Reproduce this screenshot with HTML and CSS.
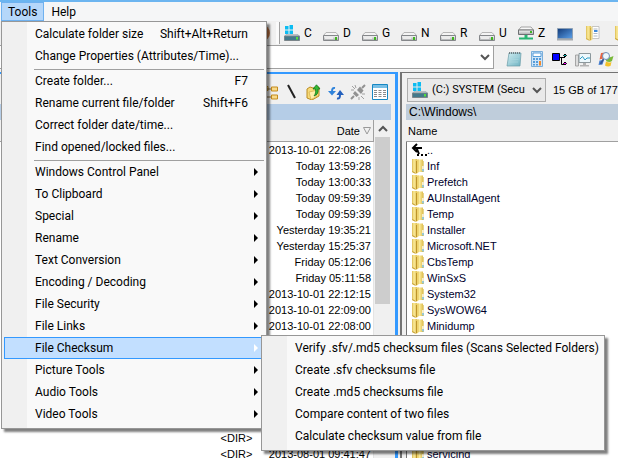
FILE: index.html
```html
<!DOCTYPE html>
<html lang="en">
<head>
<meta charset="utf-8">
<title>File Manager</title>
<link rel="stylesheet" href="styles.css">
</head>
<body>
<svg class="defs" aria-hidden="true">
  <defs>
    <linearGradient id="metal" x1="0" y1="0" x2="0" y2="1"><stop offset="0" stop-color="#fafafa"/><stop offset="1" stop-color="#a9abae"/></linearGradient>
    <linearGradient id="gold" x1="0" y1="0" x2="1" y2="0"><stop offset="0" stop-color="#dcbb50"/><stop offset=".4" stop-color="#fbeb9c"/><stop offset="1" stop-color="#dfbf52"/></linearGradient>
    <linearGradient id="screen" x1="0" y1="0" x2="1" y2="1"><stop offset="0" stop-color="#123a78"/><stop offset="1" stop-color="#5aa0ea"/></linearGradient>
    <linearGradient id="pad" x1="0" y1="0" x2="1" y2="1"><stop offset="0" stop-color="#d2eef2"/><stop offset="1" stop-color="#6db2c2"/></linearGradient>
    <symbol id="drive" viewBox="0 0 16 16">
      <path d="M3 7.500h10l2.500 3v4h-15v-4z" fill="#f4f4f4" stroke="#b5b5b5"/>
      <path d="M.5 10.500h15v5h-15z" fill="url(#metal)" stroke="#85878a"/>
      <path d="M2 12h8v2H2z" fill="#ececec"/><path d="M12 12h2v3h-2z" fill="#3fb421"/>
    </symbol>
    <symbol id="windrive" viewBox="0 0 16 16">
      <path d="M1 1h3.500v3.500H1zM5.500 0H9v4.500H5.500zM1 5.500h3.500V9H1zM5.500 5.500H9V9H5.500z" fill="#0bbcf2"/>
      <path d="M2 9.500h12l1.500 2h-15z" fill="#d6dde2" stroke="#9da5aa" stroke-width=".6"/>
      <path d="M.5 11h15v4.500h-15z" fill="#43798b" stroke="#7b858a"/><path d="M12 12h2v2.500h-2z" fill="#56dc3c"/>
    </symbol>
    <symbol id="netdrive" viewBox="0 0 16 16">
      <path d="M3 2h10l2.500 3h-15z" fill="#f8f8f8" stroke="#a3a3a3"/>
      <path d="M.5 5h15v4.500h-15z" fill="url(#metal)" stroke="#6e7073"/><path d="M12 6h2v2h-2z" fill="#3fb421"/>
      <path d="M6.500 10h3v2.500H15v2H1v-2h5.500z" fill="#27b573"/>
    </symbol>
    <symbol id="laptop" viewBox="0 0 16 16"><path d="M.5 3.500h15v10H.5z" fill="url(#screen)" stroke="#8da0b5"/><path d="M0 14h16v1.500H0z" fill="#a5a9ad"/></symbol>
    <symbol id="folderdoc" viewBox="0 0 16 16"><path d="M1 1h5v14H2l-1-1z" fill="url(#gold)"/><path d="M7 1.500h7v12H7z" fill="#fff" stroke="#b7b7b7" stroke-width=".8"/><path d="M8.500 4h4M8.500 8.500h4M8.500 11h4" stroke="#99a7b5" stroke-width=".8"/><path d="M9 5h3.500v2H9z" fill="#3d89db"/><path d="M5 3.500 7.500 1v13.500L5 16z" fill="#efd984"/><path d="M5.500 3v12M1.500 13.500l3 2" stroke="#c9a440" stroke-width=".9" fill="none"/></symbol>
    <symbol id="folder" viewBox="0 0 14 16"><path d="M1 1h5v14H2l-1-1z" fill="url(#gold)"/><path d="M6 1.500h6V14H7z" fill="url(#gold)"/><path d="M5 3.500 7.500 1v13.500L5 16z" fill="#efd36c"/><path d="M5.500 3v12M1.500 13.500l3 2" stroke="#bd942b" fill="none"/><path d="M12 3h1v11h-1z" fill="#e6d38c"/><path d="M11.300 8h1.200v5h-1.200z" fill="#fff"/><path d="M11.500 11h1v2.500h-1z" fill="#3fa5dd"/></symbol>
    <symbol id="notepad" viewBox="0 0 16 16"><path d="M3 2h12l-1 13H1z" fill="url(#pad)" stroke="#6b9ca8" stroke-width=".7"/><path d="M3.500 1v2M5.500 1v2M7.500 1v2M9.500 1v2M11.500 1v2M13.500 1v2" stroke="#636d71" stroke-width=".8"/><path d="M4 6h9M3.500 8.500h9M3 11h9" stroke="#afd9df" stroke-width=".6"/></symbol>
    <symbol id="calc" viewBox="0 0 16 16"><path d="M2.500.5h11v15h-11z" fill="#cfe5f8" stroke="#79aeda"/><path d="M4 2h8v3.500H4z" fill="#fff" stroke="#3489d0" stroke-width=".8"/><path d="M4 7h2v2H4zM7 7h2v2H7zM4 10h2v2H4zM7 10h2v2H7zM4 13h2v1.500H4zM7 13h2v1.500H7z" fill="#579dda"/><path d="M10 7h2v2h-2z" fill="#579dda"/><path d="M10 10h2v4.500h-2z" fill="#f08a2e"/></symbol>
    <symbol id="tree" viewBox="0 0 16 16"><path d="M.5 2.500h7v7h-7z" fill="#00f" stroke="#000"/><path d="M8 6.500h5M9.500 6.500v7H12" fill="none" stroke="#000"/><path d="M11.500 4.500 13 3l1.500 1.500L13 6z" fill="#0aa" stroke="#000"/><path d="M11.500 12.500 13 11l1.500 1.500L13 14z" fill="#f0f" stroke="#000"/></symbol>
    <symbol id="monitor" viewBox="0 0 16 16"><path d="M.5 4h3v11h-3z" fill="#ddd" stroke="#969696" stroke-width=".8"/><path d="M4 2.500h11.500v9H4z" fill="#edf8fc" stroke="#8c989d"/><path d="m5 8 2.500-2.500L10 9l2-2h3" fill="none" stroke="#2b9dc6"/><path d="M8 12h3v2h3v1.500H5V14h3z" fill="#b3b3b3"/></symbol>
    <symbol id="winsearch" viewBox="0 0 16 16"><path d="M3 2 8 1.500 7 7 1.500 8.500z" fill="#e86543"/><path d="M9 5c2 1.500 4 1.500 6.500 0L14 10c-2 1.500-4 1-6 0z" fill="#79b83a"/><path d="m8 10.500c2 1 3.500 1.500 5.500.5L12.500 15c-2 .7-4 .5-5.500-.5z" fill="#f4c128"/><path d="M1.500 9.500 6 9l-1.500 4.500-4 .5z" fill="#477fd0"/><circle cx="8" cy="5" r="3.500" fill="#eef8fd" stroke="#6f8fb8"/><path d="m5.500 8-3 5" stroke="#345591" stroke-width="1.500"/></symbol>
    <symbol id="foldertree" viewBox="0 0 16 16"><path d="M1 2.500h5v4H1zM9.500 3h6v4h-6zM9.500 11h6v4h-6z" fill="#f8d988" stroke="#c48b1d"/><path d="M3.500 7v6H9M4 5h5" fill="none" stroke="#8a6d38"/></symbol>
    <symbol id="slash" viewBox="0 0 16 16"><path d="m4 1 7 13" stroke="#222" stroke-width="2"/></symbol>
    <symbol id="folderup" viewBox="0 0 16 16"><path d="M1 5 4 3l3 1 6-1v9l-7 4-5-2z" fill="#f7db7a" stroke="#bb8c22"/><path d="m3 8 9-2-2 7-5 2.500z" fill="#ffeeaa" stroke="#cfa23b" stroke-width=".6"/><path d="M7 5 10.500.8 14 5h-2c.5 4-1 6-4 7 1.500-2 2-4 1.500-7z" fill="#34b936" stroke="#137719" stroke-width=".8"/></symbol>
    <symbol id="sync" viewBox="0 0 16 16"><path d="M7 4C4.500 3.500 4 5 4 8" fill="none" stroke="#2f83db" stroke-width="2"/><path d="M0 7h8l-4 4.500z" fill="#2f83db"/><path d="M9 14.500c2.500.5 3-1 3-4" fill="none" stroke="#2360bd" stroke-width="2"/><path d="M8.500 11h7.500l-4-5z" fill="#2360bd"/></symbol>
    <symbol id="plug" viewBox="0 0 16 16"><path d="m1 15 3-3M12 4l3-3" stroke="#929292" stroke-width="2"/><path d="M3 9.500 6.500 13 9 11 5 7zM7 6l4 4 2.500-3.500L10 2.500z" fill="#929292"/><path d="m2 2 3 3M5 1l1 3M1 6h3M11 12l3 3M12 10h3M9 13v3" stroke="#a1a1a1"/></symbol>
    <symbol id="listview" viewBox="0 0 16 16"><path d="M.5.500h15v15H.5z" fill="#fff" stroke="#1688c4"/><path d="M1 1h14v3H1z" fill="#78bfe5"/><path d="M2 6.500h3M6.500 6.500h3M11 6.500h3M2 8.500h3M6.500 8.500h3M11 8.500h3M2 10.500h3M6.500 10.500h3M11 10.500h3M2 12.500h3M6.500 12.500h3M11 12.500h3" stroke="#8b8b8b"/></symbol>
    <symbol id="up" viewBox="0 0 16 16"><path d="M6 2 2 6l4 4M2 6h9M6 5v2l2 5" fill="none" stroke="#000" stroke-width="2"/><path d="M6 12h2v2H6zM10 12h2v2h-2zM14 12h2v2h-2z"/></symbol>
    <symbol id="chev" viewBox="0 0 10 10"><path d="m1 3 4 4 4-4" fill="none" stroke="#555" stroke-width="2"/></symbol>
  </defs>
</svg>

<div class="app">
  <nav class="menubar">
    <button class="menu-title open">Tools</button>
    <button class="menu-title">Help</button>
  </nav>

  <div class="toolbar">
    <span class="badge-end"></span>
    <span class="grip"></span>
    <button class="drive"><svg class="icon"><use href="#windrive"/></svg>C</button>
    <button class="drive"><svg class="icon"><use href="#drive"/></svg>D</button>
    <button class="drive"><svg class="icon"><use href="#drive"/></svg>G</button>
    <button class="drive"><svg class="icon"><use href="#drive"/></svg>N</button>
    <button class="drive"><svg class="icon"><use href="#drive"/></svg>R</button>
    <button class="drive"><svg class="icon"><use href="#drive"/></svg>U</button>
    <button class="drive"><svg class="icon"><use href="#netdrive"/></svg>Z</button>
    <button class="place" aria-label="Desktop"><svg class="icon"><use href="#laptop"/></svg></button>
    <button class="place" aria-label="Documents"><svg class="icon"><use href="#folderdoc"/></svg></button>
    <button class="place" aria-label="Folder"><svg class="icon"><use href="#folder"/></svg></button>
  </div>

  <div class="command-row">
    <div class="combo command"><select aria-label="Command line"><option></option></select><svg class="chev"><use href="#chev"/></svg></div>
    <div class="tools">
      <button aria-label="Notepad"><svg class="icon"><use href="#notepad"/></svg></button>
      <button aria-label="Calculator"><svg class="icon"><use href="#calc"/></svg></button>
      <button aria-label="Registry"><svg class="icon"><use href="#tree"/></svg></button>
      <button aria-label="System monitor"><svg class="icon"><use href="#monitor"/></svg></button>
      <button aria-label="Search"><svg class="icon"><use href="#winsearch"/></svg></button>
    </div>
  </div>

  <main class="panes">
    <section class="pane active">
      <div class="pane-tools">
        <button aria-label="Folder tree"><svg class="icon"><use href="#foldertree"/></svg></button>
        <button aria-label="Root"><svg class="icon"><use href="#slash"/></svg></button>
        <button aria-label="Parent folder"><svg class="icon"><use href="#folderup"/></svg></button>
        <button aria-label="Refresh"><svg class="icon"><use href="#sync"/></svg></button>
        <button aria-label="Disconnect"><svg class="icon"><use href="#plug"/></svg></button>
        <button aria-label="Details"><svg class="icon"><use href="#listview"/></svg></button>
      </div>
      <div class="path"></div>
      <div class="list-area">
        <table class="files dates">
          <thead><tr><th class="size"></th><th>Date <svg class="sort" viewBox="0 0 8 8"><path d="M.5.500h7L4 7z" fill="none" stroke="#999"/></svg></th></tr></thead>
          <tbody>
            <tr><td></td><td>2013-10-01 22:08:26</td></tr>
            <tr><td></td><td>Today 13:59:28</td></tr>
            <tr><td></td><td>Today 13:00:33</td></tr>
            <tr><td></td><td>Today 09:59:39</td></tr>
            <tr><td></td><td>Today 09:59:39</td></tr>
            <tr><td></td><td>Yesterday 19:35:21</td></tr>
            <tr><td></td><td>Yesterday 15:25:37</td></tr>
            <tr><td></td><td>Friday 05:12:06</td></tr>
            <tr><td></td><td>Friday 05:11:58</td></tr>
            <tr><td></td><td>2013-10-01 22:12:15</td></tr>
            <tr><td></td><td>2013-10-01 22:09:00</td></tr>
            <tr><td></td><td>2013-10-01 22:08:00</td></tr>
            <tr><td></td><td></td></tr><tr><td></td><td></td></tr><tr><td></td><td></td></tr>
            <tr><td></td><td></td></tr><tr><td></td><td></td></tr><tr><td></td><td></td></tr>
            <tr><td>&lt;DIR&gt;</td><td></td></tr>
            <tr><td>&lt;DIR&gt;</td><td>2013-08-01 09:41:47</td></tr>
          </tbody>
        </table>
        <div class="scrollbar"><svg class="chev flip"><use href="#chev"/></svg><div class="thumb"></div></div>
      </div>
    </section>

    <section class="pane">
      <div class="drive-row">
        <div class="combo volume"><svg class="icon"><use href="#windrive"/></svg><select aria-label="Drive"><option>(C:) SYSTEM (Secu</option></select><svg class="chev"><use href="#chev"/></svg></div>
        <span class="free">15 GB of 177</span>
      </div>
      <div class="path">C:\Windows\</div>
      <table class="files names">
        <thead><tr><th>Name</th></tr></thead>
        <tbody>
          <tr><td><svg class="up"><use href="#up"/></svg>..</td></tr>
          <tr><td><svg class="fold"><use href="#folder"/></svg>Inf</td></tr>
          <tr><td><svg class="fold"><use href="#folder"/></svg>Prefetch</td></tr>
          <tr><td><svg class="fold"><use href="#folder"/></svg>AUInstallAgent</td></tr>
          <tr><td><svg class="fold"><use href="#folder"/></svg>Temp</td></tr>
          <tr><td><svg class="fold"><use href="#folder"/></svg>Installer</td></tr>
          <tr><td><svg class="fold"><use href="#folder"/></svg>Microsoft.NET</td></tr>
          <tr><td><svg class="fold"><use href="#folder"/></svg>CbsTemp</td></tr>
          <tr><td><svg class="fold"><use href="#folder"/></svg>WinSxS</td></tr>
          <tr><td><svg class="fold"><use href="#folder"/></svg>System32</td></tr>
          <tr><td><svg class="fold"><use href="#folder"/></svg>SysWOW64</td></tr>
          <tr><td><svg class="fold"><use href="#folder"/></svg>Minidump</td></tr>
          <tr><td><svg class="fold"><use href="#folder"/></svg></td></tr>
          <tr><td></td></tr><tr><td></td></tr><tr><td></td></tr>
          <tr><td></td></tr><tr><td></td></tr><tr><td></td></tr>
          <tr><td><svg class="fold"><use href="#folder"/></svg>servicing</td></tr>
        </tbody>
      </table>
    </section>
  </main>

  <div class="menu tools-menu" role="menu">
    <button role="menuitem">Calculate folder size<kbd>Shift+Alt+Return</kbd></button>
    <button role="menuitem">Change Properties (Attributes/Time)...</button>
    <hr>
    <button role="menuitem">Create folder...<kbd>F7</kbd></button>
    <button role="menuitem">Rename current file/folder<kbd>Shift+F6</kbd></button>
    <button role="menuitem">Correct folder date/time...</button>
    <button role="menuitem">Find opened/locked files...</button>
    <hr>
    <button role="menuitem" class="sub">Windows Control Panel</button>
    <button role="menuitem" class="sub">To Clipboard</button>
    <button role="menuitem" class="sub">Special</button>
    <button role="menuitem" class="sub">Rename</button>
    <button role="menuitem" class="sub">Text Conversion</button>
    <button role="menuitem" class="sub">Encoding / Decoding</button>
    <button role="menuitem" class="sub">File Security</button>
    <button role="menuitem" class="sub">File Links</button>
    <button role="menuitem" class="sub selected">File Checksum</button>
    <button role="menuitem" class="sub">Picture Tools</button>
    <button role="menuitem" class="sub">Audio Tools</button>
    <button role="menuitem" class="sub">Video Tools</button>
  </div>

  <div class="menu checksum-menu" role="menu">
    <button role="menuitem">Verify .sfv/.md5 checksum files (Scans Selected Folders)</button>
    <button role="menuitem">Create .sfv checksums file</button>
    <button role="menuitem">Create .md5 checksums file</button>
    <button role="menuitem">Compare content of two files</button>
    <button role="menuitem">Calculate checksum value from file</button>
  </div>
</div>
</body>
</html>
```
FILE: styles.css
```css
* { box-sizing: border-box; }

html, body { height: 100%; }

body {
  margin: 0;
  overflow: hidden;
  background: #f0f0f0;
  color: #000;
  font: 12px/16px Roboto, "Open Sans", sans-serif;
}

button, select, kbd { font: inherit; color: inherit; }

button {
  display: flex;
  align-items: center;
  padding: 0;
  border: 0;
  background: none;
  white-space: nowrap;
}

.defs { position: absolute; width: 0; height: 0; }
.icon { width: 16px; height: 16px; flex: none; }
.chev { width: 10px; height: 10px; flex: none; }
.flip { transform: rotate(180deg); }

.app {
  position: relative;
  display: flex;
  flex-direction: column;
  min-height: 100%;
  border-top: 2px solid #6cb5f0;
}

/* Menu bar */
.menubar { display: flex; height: 19px; padding-left: 1px; background: #f5f6f7; }
.menu-title { padding: 0 7px; }
.menu-title.open { background: #b5d7fa; border: 1px solid #6fb1ef; padding: 0 6px; }

/* Drive bar */
.toolbar {
  display: flex;
  align-items: center;
  height: 25px;
  padding-left: 254px;
  overflow: hidden;
  border-bottom: 1px solid #a0a0a0;
}
.badge-end {
  flex: none;
  width: 16px;
  height: 16px;
  margin-right: 6px;
  border-right: 8px solid #c67a48;
  border-radius: 8px;
}
.grip { flex: none; width: 4px; height: 22px; margin-right: 4px; background: #fafafa; border-right: 1px solid #a0a0a0; }
.drive { width: 39px; gap: 4px; flex: none; }
.place { width: 28px; flex: none; }

/* Command line */
.command-row { display: flex; height: 24px; border-bottom: 1px solid #f8f8f8; }
.combo { position: relative; display: flex; align-items: center; }
.combo select {
  flex: 1;
  min-width: 0;
  height: 100%;
  padding: 0;
  border: 0;
  background: none;
  appearance: none;
}
.combo .chev { position: absolute; right: 3px; }
.command { flex: 1; height: 23px; background: #fff; border-right: 1px solid #a0a0a0; border-bottom: 1px solid #a0a0a0; }
.tools { display: flex; gap: 7px; padding: 2px 4px 0 12px; }

/* Panes */
.panes {
  flex: 1;
  display: grid;
  grid-template-columns: minmax(0, 398fr) minmax(0, 218fr);
  gap: 2px;
  margin-top: 2px;
}
.pane { min-width: 0; padding-left: 4px; border-left: 2px solid #737373; border-top: 1px solid #737373; }
.pane.active { padding: 0 4px 0 0; border: solid #3399ff; border-width: 2px 3px 0 0; }

.pane-tools {
  display: flex;
  justify-content: flex-end;
  align-items: center;
  gap: 6px;
  height: 30px;
  padding: 5px 3px 0 0;
}
.path { height: 16px; padding-left: 3px; background: #bfcddb; }
.active .path { background: #b5cde7; }

.drive-row { display: flex; align-items: center; gap: 7px; height: 31px; padding: 2px 0 0 1px; overflow: hidden; }
.volume { flex: 0 0 139px; height: 24px; padding: 0 4px; gap: 4px; background: #e9e9e9; border: 1px solid #adadad; }
.volume select { font-size: 11px; }

.path, .files, .free { font-family: "Liberation Sans", Arial, sans-serif; font-size: 11px; line-height: 16px; white-space: nowrap; }
.path { font-size: 12px; }

.list-area { display: flex; background: #fff; }
.files { width: 100%; border-collapse: separate; border-spacing: 0; background: #fff; }
.files th { height: 22px; padding: 0 2px; background: #f0f0f0; border-bottom: 1px solid #a0a0a0; font-weight: 400; text-align: left; }
.files td { height: 16px; padding: 0 2px; }
.dates th:last-child { border-right: 1px solid #a0a0a0; }
.dates td:last-child { border-right: 1px solid #e4e4e4; }
.dates th, .dates td { text-align: right; }
.dates .size { width: 68%; }
.sort { width: 8px; height: 8px; }

.names td { color: #00002c; padding-left: 4px; border-left: 1px solid #737373; }
.fold, .up { width: 14px; height: 16px; margin-right: 2px; vertical-align: top; }
.up { width: 16px; margin-right: 0; }

.scrollbar { flex: 0 0 17px; display: flex; flex-direction: column; align-items: center; padding-top: 4px; background: #f0f0f0; }
.thumb { width: 15px; height: 167px; margin-top: 3px; background: #cdcdcd; }

/* Pop-up menus */
.menu {
  position: absolute;
  padding: 1px 2px 3px;
  border: 1px solid #979797;
  background: linear-gradient(90deg, #f0f0f0 25px, #f9f9f9 25px);
  box-shadow: 3px 3px 2px rgba(0, 0, 0, .5);
}
.menu button { width: 100%; height: 22px; padding: 0 16px 0 31px; text-align: left; }
.menu kbd { margin-left: auto; }
.menu hr { height: 3px; margin: 0 0 0 30px; border: 0; border-bottom: 1px solid #a0a0a0; }
.menu .sub { padding-right: 6px; }
.sub::after { content: ""; margin-left: auto; border: solid transparent; border-width: 4px 0 4px 4px; border-left-color: #000; }
.menu .selected { background: #c2dfff; border: 1px solid #3399ff; padding: 0 5px 0 30px; }
.selected::after { border-left-color: #fff; }
.tools-menu { top: 19px; left: 1px; width: 266px; }
.checksum-menu { top: 333px; left: 261px; width: 344px; }
```
